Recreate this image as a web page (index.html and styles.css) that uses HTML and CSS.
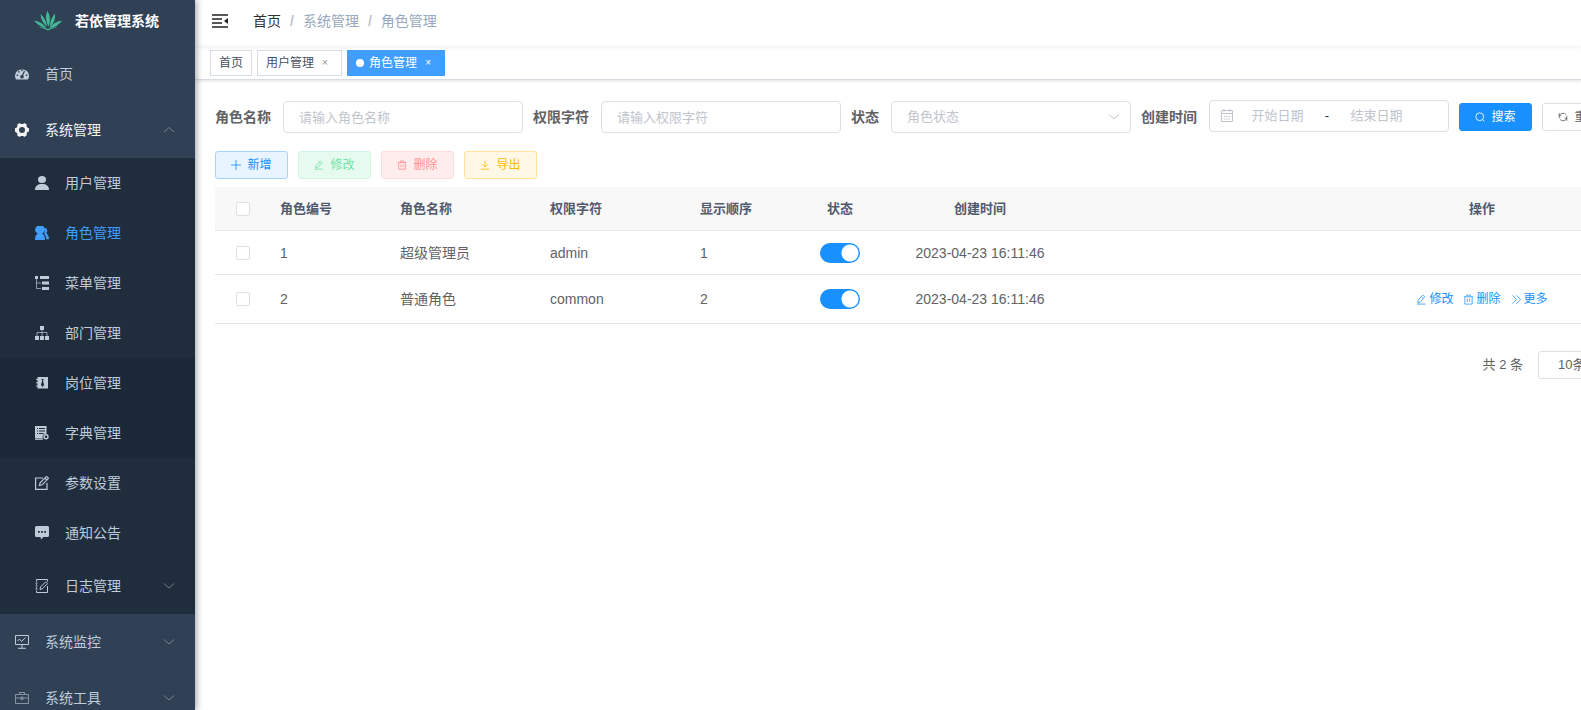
FILE: index.html
```html
<!DOCTYPE html>
<html lang="zh-CN">
<head>
<meta charset="utf-8">
<title>若依管理系统</title>
<link rel="stylesheet" href="styles.css">
</head>
<body>
<svg class="defs" aria-hidden="true">
  <symbol id="i-up" viewBox="0 0 12 12"><path d="M1 8l5-4.500L11 8" fill="none" stroke="currentColor"/></symbol>
  <symbol id="i-down" viewBox="0 0 12 12"><path d="M1 3.500L6 8l5-4.500" fill="none" stroke="currentColor"/></symbol>
  <symbol id="i-edit" viewBox="0 0 12 12"><g fill="none" stroke="currentColor"><path d="M2 9.800l.4-3L6.800 1.600a1 1 0 0 1 1.400 0l.9.7a1 1 0 0 1 0 1.400L4.700 8.900z"/><path d="M6 3l2 1.700M1 11h9.500"/></g></symbol>
  <symbol id="i-trash" viewBox="0 0 12 12"><path d="M1 3h10M4 3V1.200h4V3M2 3v8h8V3M4.700 5.200v3.500M7.300 5.200v3.500" fill="none" stroke="currentColor"/></symbol>
</svg>
<div class="app">
  <aside class="sidebar">
    <a class="logo" href="#">
      <svg class="logo-mark" viewBox="0 0 32 32" fill="#43b995"><path d="M15.300 5q4.700 8 1.200 17q-4.500-9-1.200-17zM8 8.500q6 5.500 7 14q-6.500-6-7-14zM23.500 8q1 8.500-5.500 14.500q0-8.500 5.500-14.500zM1 15.500q9 1.500 13 8q-8-1.500-13-8zM31 15.500q-4.500 7-13.500 8q4.500-6.500 13.500-8zM6 22.800q6.500-.5 10 1.700q3.500-2.200 10-1.700q-6 .7-10 3.200q-4-2.500-10-3.200z"/></svg>
      <span>若依管理系统</span>
    </a>
    <nav class="menu">
      <a class="item" href="#">
        <svg class="icon" viewBox="0 0 14 14"><path fill="currentColor" fill-rule="evenodd" d="M1 12.500A7 6.800 0 1 1 13 12.500zM6.300 2.500h1.400v1.400H6.300zM3.200 4h1.400v1.400H3.200zM1.700 7.500h1.400v1.400H1.700zM10.900 7.500h1.400v1.400h-1.400zM9 3.800L7 8a1.700 1.700 0 1 0 1.200.5L10 4.300z"/></svg>
        <span>首页</span></a>
      <a class="item open" href="#">
        <svg class="icon" viewBox="0 0 14 14"><path fill="currentColor" fill-rule="evenodd" d="M4.800 0l1 1h2.400l1-1 2.600 1.500-.3 1.500 1 1.700 1.500.6v3.200l-1.500.6-1 1.600.3 1.500L9.200 14l-1-1H5.800l-1 1-2.600-1.400.3-1.600-1-1.600L0 8.700V5.300l1.500-.6 1-1.700-.3-1.500zM7 4a3 3 0 1 0 0 6 3 3 0 0 0 0-6z"/></svg>
        <span>系统管理</span><svg class="arrow"><use href="#i-up"/></svg></a>
      <div class="submenu">
        <a class="item sub" href="#">
          <svg class="icon" viewBox="0 0 14 14" fill="currentColor"><ellipse cx="7" cy="3.500" rx="4" ry="3.500"/><path d="M0 13.500C0 10 3 8 7 8s7 2 7 5.500q0 .5-.5.5H.5q-.5 0-.5-.5z"/></svg>
          <span>用户管理</span></a>
        <a class="item sub active" href="#">
          <svg class="icon" viewBox="0 0 14 14" fill="currentColor"><path d="M5 0a3.600 3.900 0 0 1 2.200 7.600Q10 9 10 14H0q0-5 2.800-6.400A3.600 3.900 0 0 1 5 0z"/><path d="M9.300 1.700c2.800 0 3.900 3.300 2 5.600C13.300 8.700 14 11 14 13.300h-2.700Q11 9.500 9.200 7.800 10.800 4.500 9.300 1.700z"/></svg>
          <span>角色管理</span></a>
        <a class="item sub" href="#">
          <svg class="icon" viewBox="0 0 14 14" fill="currentColor"><path d="M0 0h3v3H0zM5 0h9v3H5zM7 5.500h7v3H7zM7 11h7v3H7z"/><path d="M1.500 3v9.500H6M1.500 7H6" fill="none" stroke="currentColor" opacity=".7"/></svg>
          <span>菜单管理</span></a>
        <a class="item sub" href="#">
          <svg class="icon" viewBox="0 0 14 14" fill="currentColor"><path d="M5 0h4v4H5zM0 10h4v4H0zM5 10h4v4H5zM10 10h4v4h-4z"/><path d="M7 4v6M2 10V6.500h10V10" fill="none" stroke="currentColor" opacity=".7"/></svg>
          <span>部门管理</span></a>
        <a class="item sub hover" href="#">
          <svg class="icon" viewBox="0 0 14 14"><path fill="currentColor" fill-rule="evenodd" d="M2.500 1H13v11.500H2.500zM6.300 3l1 1.500L6 9l1.500 2L9 9 8 4.500 9 3z"/><path d="M1 3.500h2M1 6.800h2M1 10h2" stroke="currentColor"/></svg>
          <span>岗位管理</span></a>
        <a class="item sub hover" href="#">
          <svg class="icon" viewBox="0 0 14 14"><path fill="currentColor" fill-rule="evenodd" d="M0 0h11.500v8A3 3 0 0 0 8 12.500H0zM2 2v1h1V2zM4 2v1h6V2zM2 4.500v1h1v-1zM4 4.500v1h6v-1zM2 7v1h1V7zM4 7v1h4.500V7z"/><path d="M0 13.300h8" stroke="currentColor"/><circle cx="11" cy="10.800" r="2" fill="none" stroke="currentColor" stroke-width="1.400"/></svg>
          <span>字典管理</span></a>
        <a class="item sub" href="#">
          <svg class="icon" viewBox="0 0 14 14" fill="none" stroke="currentColor" stroke-width="1.200"><path d="M8 2H.6v11.400H12V7"/><path d="M4.500 9.500l.6-2.700L11 .9q.6-.6 1.200 0l.8.8q.6.600 0 1.200L7.200 8.800zM9.800 2l2 2"/></svg>
          <span>参数设置</span></a>
        <a class="item sub" href="#">
          <svg class="icon" viewBox="0 0 14 14"><path fill="currentColor" fill-rule="evenodd" d="M1.500 0h11Q14 0 14 1.500v8q0 1.500-1.500 1.500H8.300L6 13.500 5.500 11h-4Q0 11 0 9.500v-8Q0 0 1.500 0zM3 5v1.700h1.800V5zM6.100 5v1.700h1.800V5zM9.200 5v1.700H11V5z"/></svg>
          <span>通知公告</span></a>
        <a class="item sub group" href="#">
          <svg class="icon" viewBox="0 0 14 14" fill="none" stroke="currentColor"><path d="M1.500 2.500v-2h11v2M12.500 7v6.500h-11v-2M1.500 4.500v1.300M1.500 8.300v1.300M.5 4h2M.5 7h2M.5 10h2"/><path d="M5 10.500l.5-2.500 5.200-5.200 1.800 1.800-5.200 5.300z"/></svg>
          <span>日志管理</span><svg class="arrow"><use href="#i-down"/></svg></a>
      </div>
      <a class="item" href="#">
        <svg class="icon" viewBox="0 0 14 14" fill="none" stroke="currentColor"><path d="M.5.5h13v9H.5zM7 9.500v4M3 13.300h8M2.500 6l2-2 2 2.500 4-4"/></svg>
        <span>系统监控</span><svg class="arrow"><use href="#i-down"/></svg></a>
      <a class="item" href="#">
        <svg class="icon dim" viewBox="0 0 14 14" fill="none" stroke="currentColor"><path d="M.5 3.500h13v9H.5zM4.500 3.500v-2h5v2M.5 7h13M6 6h2v2.500H6z"/></svg>
        <span>系统工具</span><svg class="arrow"><use href="#i-down"/></svg></a>
    </nav>
  </aside>

  <div class="main">
    <header class="navbar">
      <button class="fold" type="button" aria-label="收起菜单">
        <svg viewBox="0 0 16 14"><path d="M0 1h16M0 5h10M0 9h10M0 13h16" stroke="#222" stroke-width="1.500"/><path d="M16 4v6l-4-3z" fill="#222"/></svg>
      </button>
      <nav class="crumbs"><a href="#">首页</a><i>/</i><span>系统管理</span><i>/</i><span>角色管理</span></nav>
    </header>
    <div class="tags">
      <a class="tag" href="#">首页</a>
      <a class="tag" href="#">用户管理<b>×</b></a>
      <a class="tag current" href="#">角色管理<b>×</b></a>
    </div>

    <main class="content">
      <form class="filters">
        <label for="name">角色名称</label>
        <input class="field" id="name" type="text" placeholder="请输入角色名称">
        <label for="key">权限字符</label>
        <input class="field" id="key" type="text" placeholder="请输入权限字符">
        <label for="state">状态</label>
        <div class="select">
          <select class="field" id="state"><option>角色状态</option></select>
          <svg><use href="#i-down"/></svg>
        </div>
        <label for="from">创建时间</label>
        <div class="field range">
          <svg viewBox="0 0 14 14" fill="none" stroke="currentColor"><path d="M1.500 1.500h11v11h-11zM1.500 4.500h11M4 0v3M10 0v3M4 7.500h1.500M6.300 7.500h1.500M8.600 7.500h1.500M4 10h1.500M6.300 10h1.500M8.600 10h1.500"/></svg>
          <input id="from" type="text" placeholder="开始日期">
          <span>-</span>
          <input type="text" placeholder="结束日期" aria-label="结束日期">
        </div>
        <button class="btn primary" type="button"><svg viewBox="0 0 12 12" fill="none" stroke="currentColor"><circle cx="5.700" cy="5.700" r="4.700"/><path d="M9 9l2.300 2.300"/></svg>搜索</button>
        <button class="btn" type="button"><svg viewBox="0 0 12 12" fill="none" stroke="currentColor"><path d="M1.500 7.500V4Q3 1.500 6 1.500q2 0 3.500 1.500M10.500 4.500V8Q9 10.500 6 10.500 4 10.500 2.500 9M1.500 1.500V4.500h2.500M10.500 10.500V7.500H8"/></svg>重置</button>
      </form>

      <div class="tools">
        <button class="btn add" type="button"><svg viewBox="0 0 12 12"><path d="M6 0v12M0 6h12" stroke="currentColor"/></svg>新增</button>
        <button class="btn edit" type="button" disabled><svg><use href="#i-edit"/></svg>修改</button>
        <button class="btn del" type="button" disabled><svg><use href="#i-trash"/></svg>删除</button>
        <button class="btn export" type="button"><svg viewBox="0 0 12 12" fill="none" stroke="currentColor"><path d="M6 1v7M2.500 5L6 8.500 9.500 5M1 11h10"/></svg>导出</button>
      </div>

      <table class="grid">
        <colgroup><col class="w-check"><col class="w-id"><col class="w-name"><col class="w-name"><col class="w-short"><col class="w-short"><col class="w-time"><col></colgroup>
        <thead>
          <tr>
            <th class="mid"><input type="checkbox" aria-label="全选"></th>
            <th>角色编号</th><th>角色名称</th><th>权限字符</th><th>显示顺序</th>
            <th class="mid">状态</th><th class="mid">创建时间</th><th class="mid">操作</th>
          </tr>
        </thead>
        <tbody>
          <tr>
            <td class="mid"><input type="checkbox" aria-label="选择 1"></td>
            <td>1</td><td>超级管理员</td><td>admin</td><td>1</td>
            <td class="mid"><input class="switch" type="checkbox" role="switch" aria-label="启用 1" checked></td>
            <td class="mid">2023-04-23 16:11:46</td><td></td>
          </tr>
          <tr class="tall">
            <td class="mid"><input type="checkbox" aria-label="选择 2"></td>
            <td>2</td><td>普通角色</td><td>common</td><td>2</td>
            <td class="mid"><input class="switch" type="checkbox" role="switch" aria-label="启用 2" checked></td>
            <td class="mid">2023-04-23 16:11:46</td>
            <td><div class="ops">
              <button type="button"><svg><use href="#i-edit"/></svg>修改</button>
              <button type="button"><svg><use href="#i-trash"/></svg>删除</button>
              <button type="button"><svg viewBox="0 0 12 12" fill="none" stroke="currentColor"><path d="M1.500 1.500L6 6l-4.500 4.500M6 1.500L10.500 6 6 10.500"/></svg>更多</button>
            </div></td>
          </tr>
        </tbody>
      </table>

      <div class="pager">
        <span>共 2 条</span>
        <select aria-label="每页条数"><option>10条/页</option></select>
      </div>
    </main>
  </div>
</div>
</body>
</html>
```

FILE: styles.css
```css
* { box-sizing: border-box; }
body {
  margin: 0;
  overflow: hidden;
  font: 14px/20px "Liberation Sans", "Noto Sans CJK SC", sans-serif;
  color: #606266;
  background: #fff;
}
a { color: inherit; text-decoration: none; }
button, input, select { font: inherit; color: inherit; margin: 0; }
button { cursor: pointer; }
.defs { display: none; }
.app { display: flex; height: 100vh; }

/* Sidebar */
.sidebar {
  flex: 0 0 195px;
  overflow: hidden;
  background: #304156;
  box-shadow: 2px 0 6px rgba(0, 21, 41, .35);
  position: relative;
  z-index: 1;
}
.logo {
  display: flex;
  align-items: center;
  justify-content: center;
  gap: 12px;
  height: 46px;
  padding: 0 3px 4px 0;
  color: #fff;
  font-weight: 700;
}
.logo-mark { width: 30px; height: 30px; }
.item {
  display: flex;
  align-items: center;
  gap: 16px;
  height: 56px;
  padding: 0 20px 0 15px;
  color: #bfcbd9;
}
.item.open { color: #f4f4f5; }
.icon { width: 14px; height: 14px; flex: none; }
.dim { opacity: .6; }
.arrow { width: 12px; height: 12px; margin-left: auto; color: #909399; opacity: .8; }
.submenu { background: #1f2d3d; }
.sub { height: 50px; padding-left: 35px; }
.sub.group { height: 56px; }
.sub.hover { background: #1a2837; }
.sub.active { color: #409eff; }

/* Header */
.main { flex: 1; min-width: 0; overflow: hidden; }
.navbar {
  display: flex;
  align-items: center;
  gap: 25px;
  height: 46px;
  padding: 0 17px 5px;
  box-shadow: 0 1px 4px rgba(0, 21, 41, .08);
}
.fold { display: flex; padding: 0; border: 0; background: none; }
.fold svg { width: 16px; height: 14px; }
.crumbs { display: flex; color: #97a8be; }
.crumbs a { color: #303133; }
.crumbs i { margin: 0 9px; font-style: normal; color: #c0c4cc; font-weight: 700; }
.tags {
  display: flex;
  gap: 5px;
  height: 34px;
  padding: 4px 15px;
  border-bottom: 1px solid #d8dce5;
  box-shadow: 0 1px 3px rgba(0, 0, 0, .12);
}
.tag {
  display: flex;
  align-items: center;
  height: 26px;
  padding: 0 8px;
  border: 1px solid #d8dce5;
  color: #495060;
  background: #fff;
  font-size: 12px;
}
.tag b { width: 16px; margin-left: 3px; font-size: 10px; font-weight: 400; text-align: center; color: #909399; }
.current { border-color: #409eff; background: #409eff; color: #fff; }
.current b { color: #fff; }
.current::before { content: ""; width: 8px; height: 8px; margin-right: 5px; border-radius: 50%; background: #fff; }

/* Filters */
.content { min-width: 1719px; padding: 20px; }
.filters { display: flex; align-items: center; height: 34px; margin-bottom: 17px; }
.filters label { margin-right: 12px; font-weight: 700; white-space: nowrap; }
.field {
  width: 240px;
  height: 32px;
  margin-right: 10px;
  padding: 0 15px;
  border: 1px solid #dcdfe6;
  border-radius: 4px;
  background: #fff;
  font-size: 13px;
  outline: 0;
}
::placeholder { color: #c0c4cc; opacity: 1; }
.select { position: relative; }
.select select { display: block; appearance: none; color: #c0c4cc; }
.select svg { position: absolute; right: 21px; top: 10px; width: 12px; height: 12px; color: #c0c4cc; pointer-events: none; }
.range { display: flex; align-items: center; align-self: flex-start; padding: 0 10px; color: #303133; }
.range svg { width: 14px; height: 14px; flex: none; color: #c0c4cc; }
.range input { width: 87px; padding: 0; border: 0; outline: 0; text-align: center; }
.range span { width: 12px; text-align: center; }
.btn {
  display: flex;
  align-items: center;
  justify-content: center;
  gap: 6px;
  width: 73px;
  height: 28px;
  padding: 0;
  border: 1px solid #dcdfe6;
  border-radius: 3px;
  background: #fff;
  font-size: 12px;
}
.btn svg { width: 10px; height: 10px; flex: none; }
.ops svg { width: 11px; height: 11px; flex: none; opacity: .8; }
.btn svg, .ops svg { overflow: visible; }
.filters .btn { margin-right: 10px; }
.primary { background: #1890ff; border-color: #1890ff; color: #fff; }
.tools { display: flex; gap: 10px; margin-bottom: 8px; }
.add { color: #1890ff; background: #e8f4ff; border-color: #a3d3ff; }
.edit { color: #71e2a3; background: #e7faf0; border-color: #d0f5e0; }
.del { color: #ff9292; background: #ffeded; border-color: #ffdbdb; }
.export { color: #ffba00; background: #fff8e6; border-color: #ffe399; }

/* Table */
.grid { width: 100%; table-layout: fixed; border-collapse: separate; border-spacing: 0; }
.w-check { width: 55px; }
.w-id { width: 120px; }
.w-name { width: 150px; }
.w-short { width: 100px; }
.w-time { width: 180px; }
.grid th, .grid td {
  height: 44px;
  padding: 0 10px;
  border-bottom: 1px solid #dfe6ec;
  text-align: left;
}
.grid th { background: #f8f8f9; color: #515a6e; font-size: 13px; font-weight: 700; }
.grid .tall td { height: 49px; }
.grid .mid { text-align: center; }
.grid input {
  appearance: none;
  display: block;
  width: 14px;
  height: 14px;
  margin: 0 auto;
  border: 1px solid #dcdfe6;
  border-radius: 2px;
  background: #fff;
}
.grid .switch {
  width: 40px;
  height: 20px;
  border: 0;
  border-radius: 10px;
  background: radial-gradient(circle at 30px 10px, #fff 8px, #1890ff 9px);
}
.ops { display: flex; justify-content: center; gap: 10px; }
.ops button { display: flex; align-items: center; gap: 2px; padding: 0; border: 0; background: none; color: #1890ff; font-size: 12px; }

.pager {
  display: flex;
  align-items: center;
  justify-content: flex-end;
  gap: 15px;
  margin-top: 27px;
  padding-right: 256px;
  font-size: 13px;
}
.pager select {
  appearance: none;
  width: 100px;
  height: 28px;
  padding: 0 19px;
  border: 1px solid #dcdfe6;
  border-radius: 3px;
  background: #fff;
}
```
